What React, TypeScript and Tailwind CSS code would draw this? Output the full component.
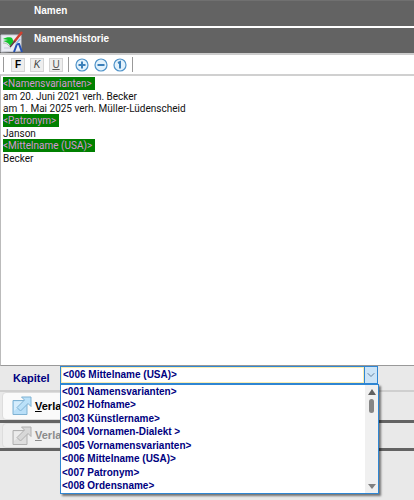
import { useState } from "react"
import { ChevronDown } from "lucide-react"

const chapters = [
  "<001 Namensvarianten>",
  "<002 Hofname>",
  "<003 Künstlername>",
  "<004 Vornamen-Dialekt >",
  "<005 Vornamensvarianten>",
  "<006 Mittelname (USA)>",
  "<007 Patronym>",
  "<008 Ordensname>",
]

const history = [
  { tag: true, text: "<Namensvarianten>" },
  { tag: false, text: "am 20. Juni 2021 verh. Becker" },
  { tag: false, text: "am 1. Mai 2025 verh. Müller-Lüdenscheid" },
  { tag: true, text: "<Patronym>" },
  { tag: false, text: "Janson" },
  { tag: true, text: "<Mittelname (USA)>" },
  { tag: false, text: "Becker" },
]

function EditIcon() {
  return (
    <svg width="24" height="24" viewBox="0 0 24 24" aria-hidden="true">
      <path d="M1 5h20v16l-20 1z" fill="#e9ebf2" stroke="#c9ccd6" />
      <path d="M3 9c3-2 8-2 9-1l2 4-4 4c-1-3-4-4-7-5l5-1z" fill="#12c32b" />
      <path d="M3 13c3 0 5 1 6 3" fill="none" stroke="#a9b8ae" />
      <path d="M4 18h7" stroke="#c3cbd8" />
      <path d="M14 22l3-8h2l3 8" fill="none" stroke="#2551b5" strokeWidth="2" />
      <path d="M14 12l8-10" stroke="#d0402f" strokeWidth="2.5" />
      <path d="M10 17l5-6" stroke="#5e3942" strokeWidth="1.5" />
      <path d="M16 14l4-5" stroke="#8fb9ea" strokeWidth="1.5" />
    </svg>
  )
}

function LinkIcon({ muted }: { muted?: boolean }) {
  const line = muted ? "#b0b0b0" : "#7fb2d3"
  return (
    <svg width="20" height="20" viewBox="0 0 20 20" aria-hidden="true">
      <path d="M1 4.500h14v14H1z" fill={muted ? "#dedede" : "#b9dff8"} stroke={line} />
      <path d="M2 5.500h11L2 15z" fill={muted ? "#ececec" : "#d6edfc"} />
      <path
        d="M9.500 1H19v9.500l-3-3-7.500 7.500-3.500-3.500L12.500 4z"
        fill={muted ? "#d8d8d8" : "#bbe1f9"}
        stroke={line}
        strokeLinejoin="round"
      />
    </svg>
  )
}

function FormatButton({ letter, label, look }: { letter: string; label: string; look: string }) {
  return (
    <button
      title={label}
      className={`flex h-[14px] w-[14px] items-center justify-center border border-[#d4d4d4] bg-[#eeeeee] text-[10px] leading-none ${look}`}
    >
      {letter}
    </button>
  )
}

function RoundButton({ label, path }: { label: string; path: string }) {
  return (
    <button title={label} aria-label={label} className="h-[14px] w-[14px]">
      <svg width="14" height="14" viewBox="0 0 14 14" aria-hidden="true">
        <circle cx="7" cy="7" r="6" fill="#e3f2fc" stroke="#4f93c9" strokeWidth="1.2" />
        <path d={path} fill="none" stroke="#3b7fb9" strokeWidth="2" />
      </svg>
    </button>
  )
}

function Separator() {
  return <span className="h-[15px] w-px bg-[#999999]" />
}

function ActionRow({ disabled }: { disabled?: boolean }) {
  return (
    <div className={`flex border-b-[3px] border-[#636363] pl-[2px] ${disabled ? "h-[28px]" : "h-[31px]"}`}>
      <button
        disabled={disabled}
        className={`flex w-[120px] items-center gap-[3px] rounded border border-[#dddddd] pl-[9px] text-[11px] font-bold ${
          disabled ? "bg-[#efefef] text-[#8b8b8b]" : "bg-[#fafafa] text-black"
        }`}
      >
        <LinkIcon muted={disabled} />
        <span>
          <u>V</u>erla
        </span>
      </button>
    </div>
  )
}

function ChapterSelect() {
  const [value, setValue] = useState("<006 Mittelname (USA)>")
  const [open, setOpen] = useState(true)

  return (
    <div className="relative w-[318px] text-[10px] font-bold text-[#000080]">
      <div className="flex h-[18px] border border-[#2f86d3] bg-white">
        <select
          id="kapitel"
          value={value}
          onChange={e => setValue(e.target.value)}
          className="min-w-0 flex-1 appearance-none border border-[#fbedb0] bg-white pb-px pl-px leading-[12px] outline-none"
        >
          {chapters.map(c => (
            <option key={c}>{c}</option>
          ))}
        </select>
        <button
          aria-label="Kapitelliste"
          onClick={() => setOpen(!open)}
          className="flex w-[13px] items-center justify-center border-l border-[#2f86d3] bg-[#cce4f7] text-[#64809b]"
        >
          <ChevronDown size={12} />
        </button>
      </div>
      {open && (
        <div className="absolute top-full left-0 z-10 flex w-[319px] border border-[#2f86d3] bg-white shadow-[2px_2px_2px_rgba(0,0,0,0.5)]">
          <ul className="flex-1">
            {chapters.map(c => (
              <li key={c} className="flex h-[13px] even:h-[14px]">
                <button
                  onClick={() => setValue(c)}
                  className="flex-1 pl-px text-left leading-[12px] whitespace-nowrap"
                >
                  {c}
                </button>
              </li>
            ))}
          </ul>
          <div className="flex w-[13px] flex-col items-center bg-[#f0f0f0] py-1">
            <svg width="8" height="6" viewBox="0 0 8 6" aria-hidden="true">
              <path d="M4 0l4 6H0z" fill="#606060" />
            </svg>
            <span className="mt-1 h-[14px] w-[5px] rounded-full bg-[#858585]" />
            <svg className="mt-auto" width="8" height="6" viewBox="0 0 8 6" aria-hidden="true">
              <path d="M0 1h8L4 6z" fill="#808080" />
            </svg>
          </div>
        </div>
      )}
    </div>
  )
}

export default function App() {
  return (
    <div className="min-h-screen bg-[#e9e9e9] font-['Liberation_Sans',Arial,sans-serif]">
      <header className="flex h-[26px] items-start border-t border-[#707070] bg-[#636363] pl-[34px] text-[10px] leading-[20px] font-bold text-white">
        <h2>Namen</h2>
      </header>
      <header className="flex h-[29px] items-start gap-[10px] border-t-2 border-b-2 border-t-white border-b-[#cccccc] bg-[#636363] text-[10px] leading-[21px] font-bold text-white">
        <span className="pt-[2px]">
          <EditIcon />
        </span>
        <h2>Namenshistorie</h2>
      </header>

      <div className="flex h-[19px] items-center bg-white pl-[3px]">
        <Separator />
        <div className="flex gap-[5px] pr-[5px] pl-[7px]">
          <FormatButton letter="F" label="Fett" look="font-bold text-black" />
          <FormatButton letter="K" label="Kursiv" look="italic text-[#444444]" />
          <FormatButton letter="U" label="Unterstrichen" look="underline text-[#555555]" />
        </div>
        <Separator />
        <div className="flex gap-[5px] pr-[5px] pl-[6px]">
          <RoundButton label="Vergrößern" path="M7 3.500v7M3.500 7h7" />
          <RoundButton label="Verkleinern" path="M3.500 7h7" />
          <RoundButton label="Originalgröße" path="M5 5l2-1v6.500" />
        </div>
        <Separator />
      </div>

      <div
        role="textbox"
        aria-label="Namenshistorie"
        aria-multiline="true"
        contentEditable
        suppressContentEditableWarning
        className="h-[292px] border-t-2 border-b border-l border-t-[#d0d0d0] border-b-[#999999] border-l-[#bbbbbb] bg-white pt-px pl-[2px] font-['Roboto','Open_Sans',sans-serif] text-[10px] text-[#111111] outline-none"
      >
        {history.map(line =>
          line.tag ? (
            <div key={line.text} className="h-[13px] w-fit bg-[#008000] pr-[3px] leading-[13px] text-[#d795d7]">
              {line.text}
            </div>
          ) : (
            <div key={line.text} className="h-[12px] leading-[14px]">
              {line.text}
            </div>
          )
        )}
      </div>

      <div className="flex h-[26px] items-start border-b-2 border-[#cfcfcf]">
        <label htmlFor="kapitel" className="w-[60px] pl-[13px] text-[11px] leading-[25px] font-bold text-[#000080]">
          Kapitel
        </label>
        <ChapterSelect />
      </div>
      <ActionRow />
      <ActionRow disabled />
    </div>
  )
}
